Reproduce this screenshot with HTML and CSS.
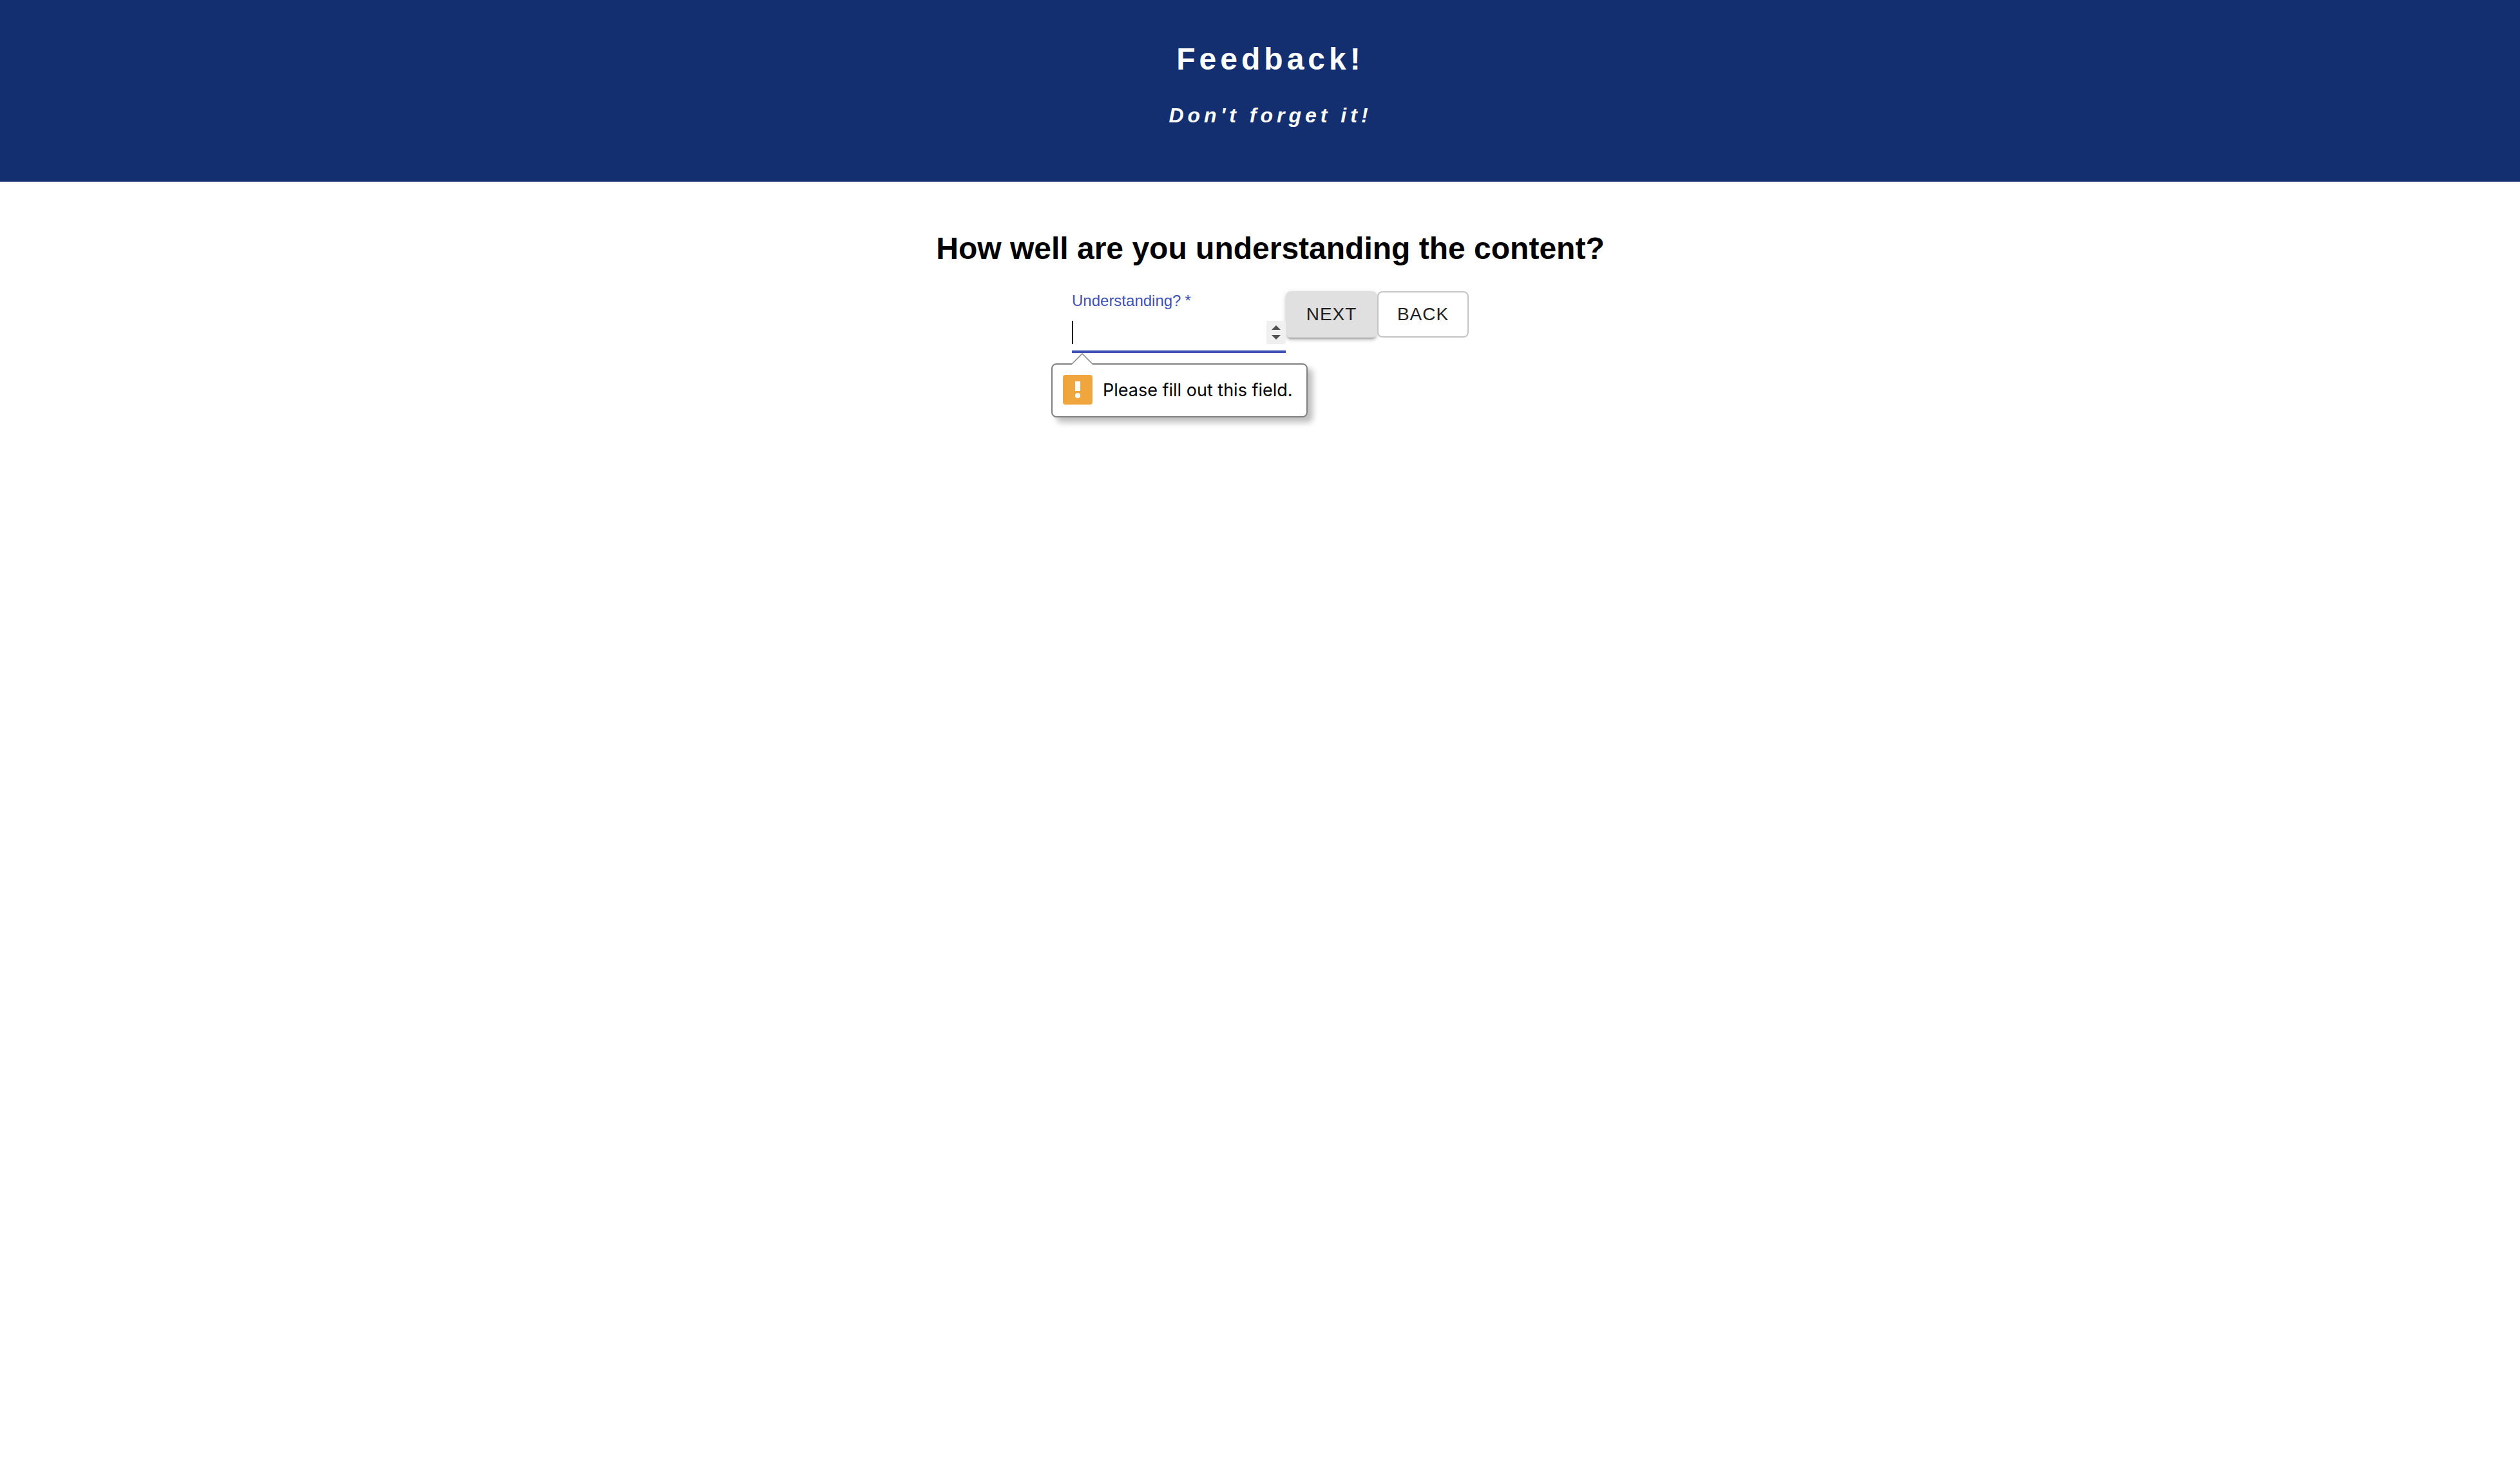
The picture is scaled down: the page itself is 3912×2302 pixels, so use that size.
FILE: index.html
```html
<!DOCTYPE html>
<html lang="en">
<head>
<meta charset="utf-8">
<title>Feedback!</title>
<link rel="stylesheet" href="styles.css">
</head>
<body>
<header class="banner">
  <h1 class="banner-title">Feedback!</h1>
  <p class="banner-note">Don't forget it!</p>
</header>
<main class="content">
  <h2 class="question">How well are you understanding the content?</h2>
  <form class="form" novalidate>
    <div class="field">
      <label class="label" for="understanding">Understanding?<span class="star">*</span></label>
      <div class="control">
        <input class="input" id="understanding" type="number" required>
        <span class="caret"></span>
        <svg class="spinner" viewBox="0 0 30 36" aria-hidden="true">
          <path d="M0 0H30V34Q30 36 28 36H0Z" fill="#f0f0f0"/>
          <path d="M8 14L15 7L22 14ZM8 22L15 29L22 22Z" fill="#505050"/>
        </svg>
      </div>
      <div class="hint">
        <svg class="pointer" viewBox="0 0 32 18" aria-hidden="true">
          <path d="M0 18V17L16 1L32 17V18Z" fill="#fff"/>
          <path d="M0 17L16 1L32 17" fill="none" stroke="#808080" stroke-width="1.4"/>
        </svg>
        <svg class="warning" viewBox="0 0 46 46" aria-hidden="true">
          <rect width="46" height="46" rx="4" fill="#f0a63c"/>
          <rect x="19" y="10" width="8" height="15" fill="#fff"/>
          <circle cx="23" cy="32" r="4" fill="#fff"/>
        </svg>
        <span>Please fill out this field.</span>
      </div>
    </div>
    <button class="button button-next" type="submit">NEXT</button>
    <button class="button button-back" type="button">BACK</button>
  </form>
</main>
</body>
</html>
```
FILE: styles.css
```css
* {
  box-sizing: border-box;
}

body {
  margin: 0;
  min-height: 100vh;
  background: #fff;
  color: #000;
  font-family: "Liberation Sans", Helvetica, Arial, sans-serif;
}

.banner {
  padding: 64px 0 84px 32px;
  background: #132f70;
  color: #fff;
  text-align: center;
  letter-spacing: 6px;
}

.banner-title,
.question {
  margin: 0;
  font-size: 48px;
  line-height: 56px;
  font-weight: bold;
}

.banner-note {
  margin: 40px 0 0;
  font-size: 32px;
  line-height: 38px;
  font-style: italic;
  font-weight: bold;
}

.content {
  padding: 76px 0 160px 32px;
  text-align: center;
}

.form {
  display: flex;
  justify-content: center;
  align-items: flex-start;
  margin-top: 38px;
}

.field {
  position: relative;
  width: 332px;
  text-align: left;
}

.label {
  display: block;
  color: #3f51b5;
  font-size: 24px;
  line-height: 30px;
}

.star {
  margin-left: 6px;
}

.control {
  position: relative;
  margin-top: 16px;
  padding-bottom: 10px;
  border-bottom: 4px solid #3f51b5;
}

.input {
  display: block;
  width: 100%;
  height: 36px;
  padding: 0;
  border: 0;
  outline: 0;
  background: transparent;
  font: 32px/36px "Liberation Sans", Arial, sans-serif;
  appearance: textfield;
}

.caret {
  position: absolute;
  left: 0;
  top: 0;
  width: 2px;
  height: 36px;
  background: #212121;
}

.spinner {
  position: absolute;
  right: 0;
  top: 0;
  width: 30px;
  height: 36px;
}

.button {
  width: 142px;
  height: 72px;
  padding: 0;
  border: 2px solid #c4c4c4;
  border-radius: 8px;
  background: #fff;
  color: #212121;
  font: 28px/48px "Liberation Sans", Arial, sans-serif;
  letter-spacing: 1px;
}

.button-next {
  border-color: #e0e0e0;
  background: #e0e0e0;
  box-shadow: 0 6px 2px -4px rgba(0, 0, 0, 0.2), 0 4px 4px 0 rgba(0, 0, 0, 0.14), 0 2px 10px 0 rgba(0, 0, 0, 0.12);
}

.hint {
  position: absolute;
  z-index: 1;
  top: 112px;
  left: -32px;
  display: flex;
  align-items: center;
  gap: 16px;
  width: 398px;
  height: 84px;
  padding: 0 16px;
  border: 2px solid #808080;
  border-radius: 8px;
  background: #fff;
  box-shadow: 8px 8px 10px rgba(0, 0, 0, 0.25);
  font: 27px/36px Inter, sans-serif;
  white-space: nowrap;
}

.pointer {
  position: absolute;
  top: -18px;
  left: 30px;
  width: 32px;
  height: 18px;
}

.warning {
  flex: none;
  width: 46px;
  height: 46px;
  margin-bottom: 2px;
}
```
